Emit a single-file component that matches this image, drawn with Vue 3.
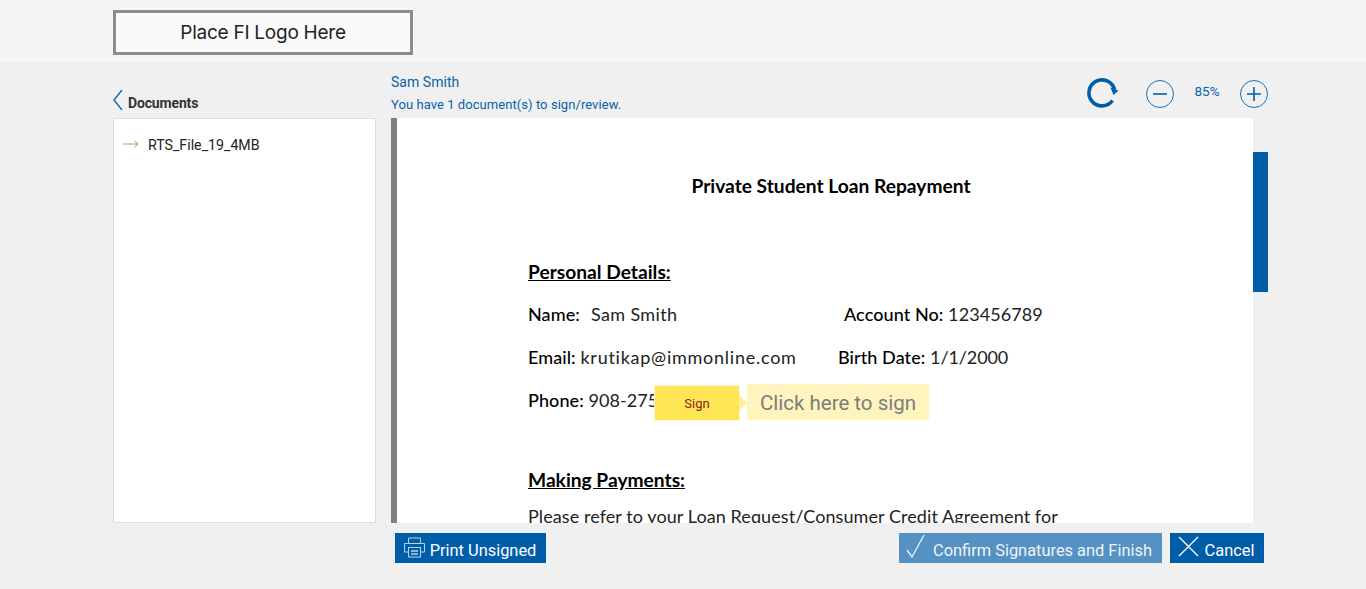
<script setup>
const rows = [
  { id: 1, pairs: [
    { label: 'Name:', value: ' Sam Smith', width: 316, cls: 'roomy' },
    { label: 'Account No:', value: '123456789', width: 0, cls: '' }
  ] },
  { id: 2, pairs: [
    { label: 'Email:', value: 'krutikap@immonline.com', width: 310, cls: 'wide' },
    { label: 'Birth Date:', value: '1/1/2000', width: 0, cls: 'tight' }
  ] }
]
</script>

<template>
  <div class="page">
    <header class="top">
      <div class="logo">Place FI Logo Here</div>
    </header>

    <main class="main">
      <section class="heads">
        <div class="back">
          <svg width="11" height="22" viewBox="0 0 11 22"><path d="M10 1 2 11l8 10" fill="none" stroke="#0a6db5" stroke-width="1.4"/></svg>
          <b>Documents</b>
        </div>
        <div class="who">
          <div class="name">Sam Smith</div>
          <div class="msg">You have 1 document(s) to sign/review.</div>
        </div>
        <div class="tools">
          <svg class="refresh" width="34" height="34" viewBox="0 0 34 34">
            <path d="M29.500 13.500A13 13 0 1 0 27.500 24.500" fill="none" stroke="#005ea8" stroke-width="3.600"/>
            <path d="M25.500 11.500 33.500 14.500 28.500 19z" fill="#005ea8"/>
          </svg>
          <svg class="round minus" width="28" height="28" viewBox="0 0 28 28">
            <circle cx="14" cy="14" r="13.500" fill="none" stroke="#1473b8"/>
            <path d="M7 14h14" stroke="#005ea8" stroke-width="1.600"/>
          </svg>
          <span class="pct">85%</span>
          <svg class="round" width="28" height="28" viewBox="0 0 28 28">
            <circle cx="14" cy="14" r="13.500" fill="none" stroke="#1473b8"/>
            <path d="M7 14h14M14 7v14" stroke="#005ea8" stroke-width="1.600"/>
          </svg>
        </div>
      </section>

      <section class="body">
        <aside class="list">
          <div class="file">
            <svg width="16" height="8" viewBox="0 0 16 8"><path d="M0 4h15M11.500 .8 15 4l-3.500 3.200" fill="none" stroke="#8fae5d"/></svg>
            <span>RTS_File_19_4MB</span>
          </div>
        </aside>

        <div class="viewer">
          <article class="doc">
            <h1>Private Student Loan Repayment</h1>
            <h2 class="first">Personal Details:</h2>
            <p v-for="row in rows" :key="row.id" class="line">
              <span v-for="p in row.pairs" :key="p.label" class="pair" :style="{ width: p.width ? p.width + 'px' : 'auto' }"><b>{{ p.label }}</b> <span :class="p.cls">{{ p.value }}</span></span>
            </p>
            <p class="line phone"><b>Phone:</b> 908-275-0000</p>
            <h2 class="second">Making Payments:</h2>
            <p class="line para">Please refer to your Loan Request/Consumer Credit Agreement for</p>
            <div class="sign">
              <button class="signbtn">Sign</button>
              <span class="tip">Click here to sign</span>
            </div>
          </article>
          <div class="track"><div class="thumb"></div></div>
        </div>
      </section>

      <section class="actions">
        <button class="btn print">
          <svg width="24" height="22" viewBox="0 0 24 22" fill="none" stroke="#b9d2e6" stroke-width="1">
            <path d="M5.500 6V1h12v5M5 15H1.500V6.500h20V15H18"/>
            <rect x="5.500" y="10.500" width="12" height="9.500" fill="#005ea8"/>
            <path d="M8 14h7M8 17h7" stroke-width="1.400"/>
          </svg>
          <span>Print Unsigned</span>
        </button>
        <div class="right">
          <button class="btn confirm">
            <svg width="20" height="24" viewBox="0 0 20 24" fill="none" stroke="#eef4f9" stroke-width="1.300"><path d="M1 16l5 7L18 1"/></svg>
            <span>Confirm Signatures and Finish</span>
          </button>
          <button class="btn cancel">
            <svg width="21" height="21" viewBox="0 0 21 21" fill="none" stroke="#fff" stroke-width="1.300"><path d="M1 1l19 19M20 1 1 20"/></svg>
            <span>Cancel</span>
          </button>
        </div>
      </section>
    </main>
  </div>
</template>

<style>
html, body { margin: 0; background: #f0f0f0; }
</style>

<style scoped>
.page { height: 589px; overflow: hidden; background: #f0f0f0; font-family: Roboto, "Liberation Sans", sans-serif; }
.top { height: 62px; background: #f5f5f5; padding: 10px 0 0 113px; box-sizing: border-box; }
.logo { width: 300px; height: 45px; box-sizing: border-box; border: 3px solid #8c8c8c; background: #fafafa; color: #222; font: 19px/39px Inter, sans-serif; text-align: center; letter-spacing: -.25px; }
.main { padding-left: 113px; width: 1155px; }
.heads { height: 56px; display: flex; position: relative; }
.back { width: 278px; display: flex; align-items: flex-end; gap: 5px; padding-bottom: 7px; box-sizing: border-box; }
.back svg { margin-left: -1px; }
.back b { font-size: 14px; color: #333; line-height: 15px; letter-spacing: -.15px; }
.who { padding-top: 12px; color: #0862ab; }
.name { font-size: 14px; line-height: 16px; letter-spacing: .03px; }
.msg { font-size: 13px; line-height: 16px; margin-top: 7px; letter-spacing: .06px; }
.tools { margin-left: auto; display: flex; align-items: center; padding-top: 7px; box-sizing: border-box; height: 56px; }
.refresh { margin-right: 27px; margin-top: -1px; margin-left: -2px; }
.pct { width: 66px; text-align: center; font-size: 13.500px; color: #0862ab; margin-top: -5px; }
.body { display: flex; height: 405px; }
.list { width: 263px; box-sizing: border-box; background: #fff; border: 1px solid #dedede; margin-right: 15px; padding: 18px 9px; }
.file { display: flex; align-items: center; gap: 9px; font-size: 14.200px; line-height: 16px; color: #222; }
.file svg { margin-top: -3px; }
.viewer { flex: 1; display: flex; min-width: 0; }
.doc { position: relative; width: 862px; box-sizing: border-box; background: #fff; border-left: 6px solid #808080; padding-left: 131px; overflow: hidden; font-family: Lato, sans-serif; color: #222; }
.doc h1 { margin: 57px 0 0; width: 606px; font-size: 19.200px; line-height: 22px; text-align: center; font-weight: 700; color: #000; }
.doc h2 { margin: 0; font-size: 19.200px; line-height: 24px; font-weight: 700; color: #000; text-decoration: underline; }
.first { padding-top: 63px; }
.second { padding-top: 56px; }
.line { margin: 19px 0 0; line-height: 24px; white-space: nowrap; font-size: 18px; display: flex; letter-spacing: .08px; }
.first + .line { margin-top: 18px; }
.line b { font-weight: 500; color: #000; }
.pair { white-space: pre; display: block; }
.roomy { letter-spacing: .35px; margin-left: 1.500px; }
.wide { letter-spacing: .75px; }
.tight { letter-spacing: -.1px; }
.line.phone { display: block; }
.line.para { display: block; margin-top: 12px; }
.sign { position: absolute; left: 257px; top: 266px; display: flex; align-items: flex-start; }
.signbtn { width: 86px; height: 36px; margin-top: 1px; border: 1px solid #fbf6dc; background: #ffe654; color: #8a1c14; font: 13px Roboto, sans-serif; padding: 0; position: relative; }
.signbtn::after { content: ""; position: absolute; left: 100%; top: 9px; border: 8px solid transparent; border-left-color: #ffeea0; }
.tip { margin-left: 7px; width: 182px; height: 36px; line-height: 38px; background: #fff4bd; color: #7c7c7c; font-size: 20.500px; font-family: Roboto, sans-serif; text-align: center; }
.track { width: 15px; }
.thumb { margin-top: 34px; height: 140px; background: #005ea8; }
.actions { display: flex; justify-content: space-between; padding: 10px 4px 0 282px; }
.right { display: flex; gap: 8px; }
.btn { height: 30px; border: 0; padding: 0; display: flex; align-items: center; justify-content: center; color: #fff; background: #005ea8; font: 16.400px Roboto, sans-serif; white-space: nowrap; }
.btn span { position: relative; top: 2px; }
.print { width: 151px; gap: 3px; padding-right: 3px; box-sizing: border-box; }
.print svg { margin-left: 1px; }
.confirm { width: 263px; background: #5591c2; color: #eef4f9; gap: 7px; padding-right: 3px; box-sizing: border-box; }
.confirm svg { margin-top: -4px; }
.cancel { width: 94px; gap: 6px; padding-right: 2px; box-sizing: border-box; }
.cancel svg { margin-top: -3px; }
</style>
